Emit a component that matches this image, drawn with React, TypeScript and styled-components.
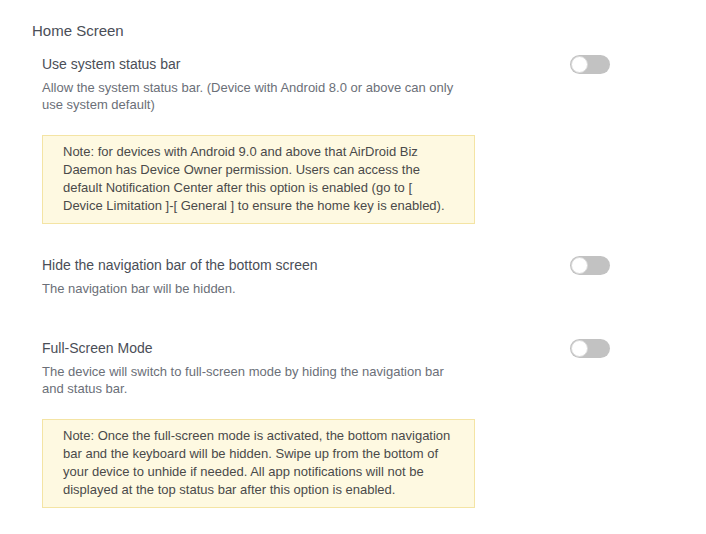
import React from "react";
import styled, { createGlobalStyle } from "styled-components";

const GlobalStyle = createGlobalStyle`
  html, body {
    margin: 0;
    padding: 0;
    background: #ffffff;
    font-family: "Liberation Sans", Arial, sans-serif;
  }
`;

const Page = styled.div`
  padding: 20px 0 0 32px;
  width: 578px;
`;

const Heading = styled.div`
  font-size: 15px;
  line-height: 22px;
  color: #4a4e57;
  margin-bottom: 11px;
`;

const List = styled.div`
  display: flex;
  flex-direction: column;
  gap: 30px;
  padding-left: 10px;
`;

const Item = styled.div`
  display: flex;
  flex-direction: column;
`;

const Row = styled.div`
  display: flex;
  align-items: flex-start;
  justify-content: space-between;
`;

const TextCol = styled.div`
  display: flex;
  flex-direction: column;
  width: 420px;
  padding-bottom: 10px;
`;

const Title = styled.div`
  font-size: 14px;
  line-height: 22px;
  color: #4a4e57;
  margin-bottom: 4px;
`;

const Desc = styled.div`
  font-size: 13px;
  line-height: 17px;
  color: #6b6f78;
`;

const Switch = styled.div<{ $on?: boolean }>`
  position: relative;
  width: 40px;
  height: 19px;
  border-radius: 10px;
  background: ${(p) => (p.$on ? "#2f7ff0" : "#c2c2c2")};
  margin-top: 2px;
  flex-shrink: 0;
  &::after {
    content: "";
    position: absolute;
    top: 1px;
    left: ${(p) => (p.$on ? "22px" : "1px")};
    width: 15px;
    height: 15px;
    border-radius: 50%;
    background: #ffffff;
    border: 1px solid #d9d9d9;
  }
`;

const Note = styled.div`
  margin-top: 12px;
  width: 391px;
  padding: 7px 20px 8px 20px;
  background: #fef9e1;
  border: 1px solid #f4e4a4;
  font-size: 13px;
  line-height: 18px;
  color: #4a4a4a;
`;

type Setting = { title: string; desc: string; note?: string };

const settings: Setting[] = [
  {
    title: "Use system status bar",
    desc: "Allow the system status bar. (Device with Android 8.0 or above can only use system default)",
    note: "Note: for devices with Android 9.0 and above that AirDroid Biz Daemon has Device Owner permission. Users can access the default Notification Center after this option is enabled (go to [ Device Limitation ]-[ General ] to ensure the home key is enabled).",
  },
  {
    title: "Hide the navigation bar of the bottom screen",
    desc: "The navigation bar will be hidden.",
  },
  {
    title: "Full-Screen Mode",
    desc: "The device will switch to full-screen mode by hiding the navigation bar and status bar.",
    note: "Note: Once the full-screen mode is activated, the bottom navigation bar and the keyboard will be hidden. Swipe up from the bottom of your device to unhide if needed. All app notifications will not be displayed at the top status bar after this option is enabled.",
  },
];

export default function App() {
  return (
    <>
      <GlobalStyle />
      <Page>
        <Heading>Home Screen</Heading>
        <List>
          {settings.map((s) => (
            <Item key={s.title}>
              <Row>
                <TextCol>
                  <Title>{s.title}</Title>
                  <Desc>{s.desc}</Desc>
                </TextCol>
                <Switch />
              </Row>
              {s.note && <Note>{s.note}</Note>}
            </Item>
          ))}
        </List>
      </Page>
    </>
  );
}
